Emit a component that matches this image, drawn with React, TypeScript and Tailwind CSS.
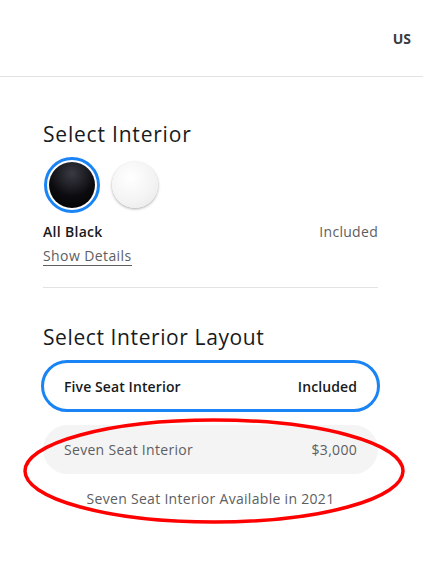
export default function App() {
  return (
    <div className="relative h-[568px] w-[423px] bg-white font-['Open_Sans',sans-serif] text-[#171a20]">
      <header className="flex h-[77px] items-center justify-end border-b border-[#e2e2e2] pr-[12px]">
        <span className="text-[14px] font-bold text-[#393c41]">US</span>
      </header>

      <main className="pl-[43px] pr-[45px] pt-[43px]">
        <h2 className="text-[21px] leading-[28px] tracking-[0.8px]">Select Interior</h2>

        <div className="mt-[9px] flex items-center gap-[12px]">
          <div className="ml-[1px] flex h-[56px] w-[56px] items-center justify-center rounded-full border-[3px] border-[#1a84f4]">
            <div className="h-[46px] w-[46px] rounded-full bg-[radial-gradient(circle_at_50%_25%,#3a3a44_0%,#0c0c10_55%,#000_100%)]" />
          </div>
          <div className="h-[46px] w-[46px] rounded-full bg-[radial-gradient(circle_at_40%_35%,#ffffff_0%,#f3f3f3_60%,#e6e6e6_100%)] shadow-[0_1px_3px_rgba(0,0,0,0.35)]" />
        </div>

        <div className="mt-[8px] flex items-center justify-between text-[14px] tracking-[0.3px]">
          <span className="font-semibold text-[#171a20]">All Black</span>
          <span className="text-[#5c5e62]">Included</span>
        </div>
        <div className="mt-[1px]">
          <span className="border-b border-[#5c5e62] text-[14px] leading-[18px] tracking-[0.4px] text-[#5c5e62]">Show Details</span>
        </div>

        <div className="mt-[20px] border-t border-[#e2e2e2]" />

        <h2 className="mt-[35px] text-[21px] leading-[28px] tracking-[0.6px]">Select Interior Layout</h2>

        <div className="-ml-[2px] -mr-[2px] mt-[9px] flex h-[52px] items-center justify-between rounded-full border-[3px] border-[#1a84f4] px-[20px] text-[14px] font-semibold tracking-[0.1px]">
          <span>Five Seat Interior</span>
          <span>Included</span>
        </div>

        <div className="mt-[13px] flex h-[49px] items-center justify-between rounded-full bg-[#f4f4f4] px-[21px] text-[14px] tracking-[0.3px] text-[#5c5e62]">
          <span>Seven Seat Interior</span>
          <span>$3,000</span>
        </div>

        <p className="mt-[14px] text-center text-[14px] tracking-[0.3px] text-[#5c5e62]">Seven Seat Interior Available in 2021</p>
      </main>

      <svg className="pointer-events-none absolute left-[22px] top-[416px]" width="384" height="110" viewBox="0 0 384 110">
        <ellipse cx="192" cy="55" rx="189" ry="51" fill="none" stroke="#ff0000" strokeWidth="3.5" />
      </svg>
    </div>
  );
}
